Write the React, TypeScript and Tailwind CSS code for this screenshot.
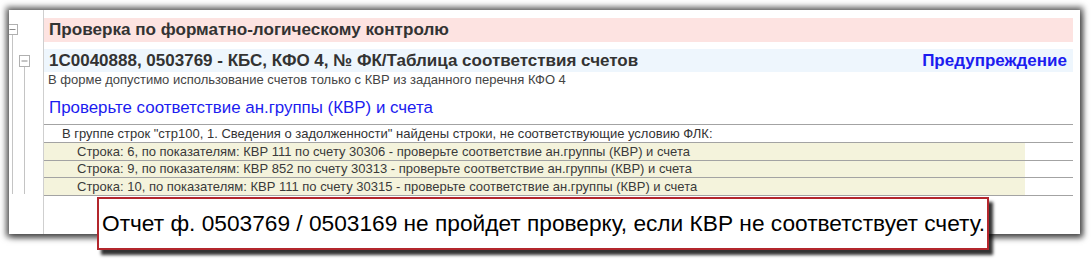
import React from "react";

const rows = [
  "Строка: 6, по показателям: КВР 111 по счету 30306 - проверьте соответствие ан.группы (КВР) и счета",
  "Строка: 9, по показателям: КВР 852 по счету 30313 - проверьте соответствие ан.группы (КВР) и счета",
  "Строка: 10, по показателям: КВР 111 по счету 30315 - проверьте соответствие ан.группы (КВР) и счета",
];

// Дерево слева (свернуть/развернуть)
function TreeGutter() {
  return (
    <svg width="34" height="224" className="block">
      <line x1="3.5" y1="24" x2="3.5" y2="184" stroke="#c4c4c4" />
      <line x1="15.5" y1="56" x2="15.5" y2="184" stroke="#c4c4c4" />
      <rect x="-1.5" y="14.5" width="10" height="10" fill="#fff" stroke="#b0b0b0" />
      <line x1="0.5" y1="19.5" x2="6.5" y2="19.5" stroke="#8a8a8a" />
      <rect x="10.5" y="45.5" width="10" height="11" fill="#fff" stroke="#b0b0b0" />
      <line x1="12.5" y1="51" x2="18.5" y2="51" stroke="#8a8a8a" />
    </svg>
  );
}

export default function App() {
  return (
    <div
      className="relative h-[264px] w-[1091px] overflow-hidden bg-white pl-[9px] pt-[10px]"
      style={{ fontFamily: '"Liberation Sans", Arial, sans-serif' }}
    >
      <div className="flex h-[224px] w-[1071px] overflow-hidden bg-white shadow-[0_0_6px_3px_rgba(0,0,0,0.62),2px_4px_6px_rgba(0,0,0,0.35)]">
        <div className="w-[34px] shrink-0">
          <TreeGutter />
        </div>
        <div className="flex-1 border-l border-[#cfcfcf] pr-[7px] pt-[8px]">
          <div className="flex h-[24px] items-center bg-[#fde3e1] pl-[5px] text-[17.1px] font-bold text-[#333]">
            Проверка по форматно-логическому контролю
          </div>
          <div className="mt-[7px] flex h-[23px] items-center justify-between bg-[#eef6fd] pl-[5px] pr-[6px] text-[17px] font-bold">
            <span className="text-[#333]">
              1C0040888, 0503769 - КБС, КФО 4, № ФК/Таблица соответствия счетов
            </span>
            <span className="text-[#1c1cf0]">Предупреждение</span>
          </div>
          <div className="h-[16px] whitespace-nowrap pl-[4px] text-[13px] leading-[16px] text-[#444]">
            В форме допустимо использование счетов только с КВР из заданного перечня КФО 4
          </div>
          <div className="h-[36px] pl-[5px] pt-[10px] text-[16.9px] leading-[20px] text-[#1c1cf0]">
            Проверьте соответствие ан.группы (КВР) и счета
          </div>
          <div className="border-t border-[#a3a3a3]">
            <div className="h-[17px] whitespace-nowrap pl-[18px] text-[13px] leading-[17px] text-[#333]">
              В группе строк "стр100, 1. Сведения о задолженности" найдены строки, не соответствующие условию ФЛК:
            </div>
            {rows.map((r, i) => (
              <div key={i} className="border-t border-[#a3a3a3]">
                <div
                  className={`w-[981px] whitespace-nowrap bg-[#f4f3dc] pl-[33px] text-[13px] text-[#3a3a3a] ${
                    i === 1 ? "h-[16px] leading-[16px]" : "h-[17px] leading-[17px]"
                  }`}
                >
                  {r}
                </div>
              </div>
            ))}
            <div className="border-t border-[#a3a3a3]" />
          </div>
        </div>
      </div>

      {/* Выноска поверх таблицы */}
      <div className="absolute left-[97px] top-[197px] flex h-[53px] w-[892px] items-center whitespace-nowrap border-2 border-[#b3262c] bg-white pl-[3px] text-[22.7px] text-black shadow-[4px_5px_3px_rgba(0,0,0,0.8)]">
        Отчет ф. 0503769 / 0503169 не пройдет проверку, если КВР не соответствует счету.
      </div>
    </div>
  );
}
